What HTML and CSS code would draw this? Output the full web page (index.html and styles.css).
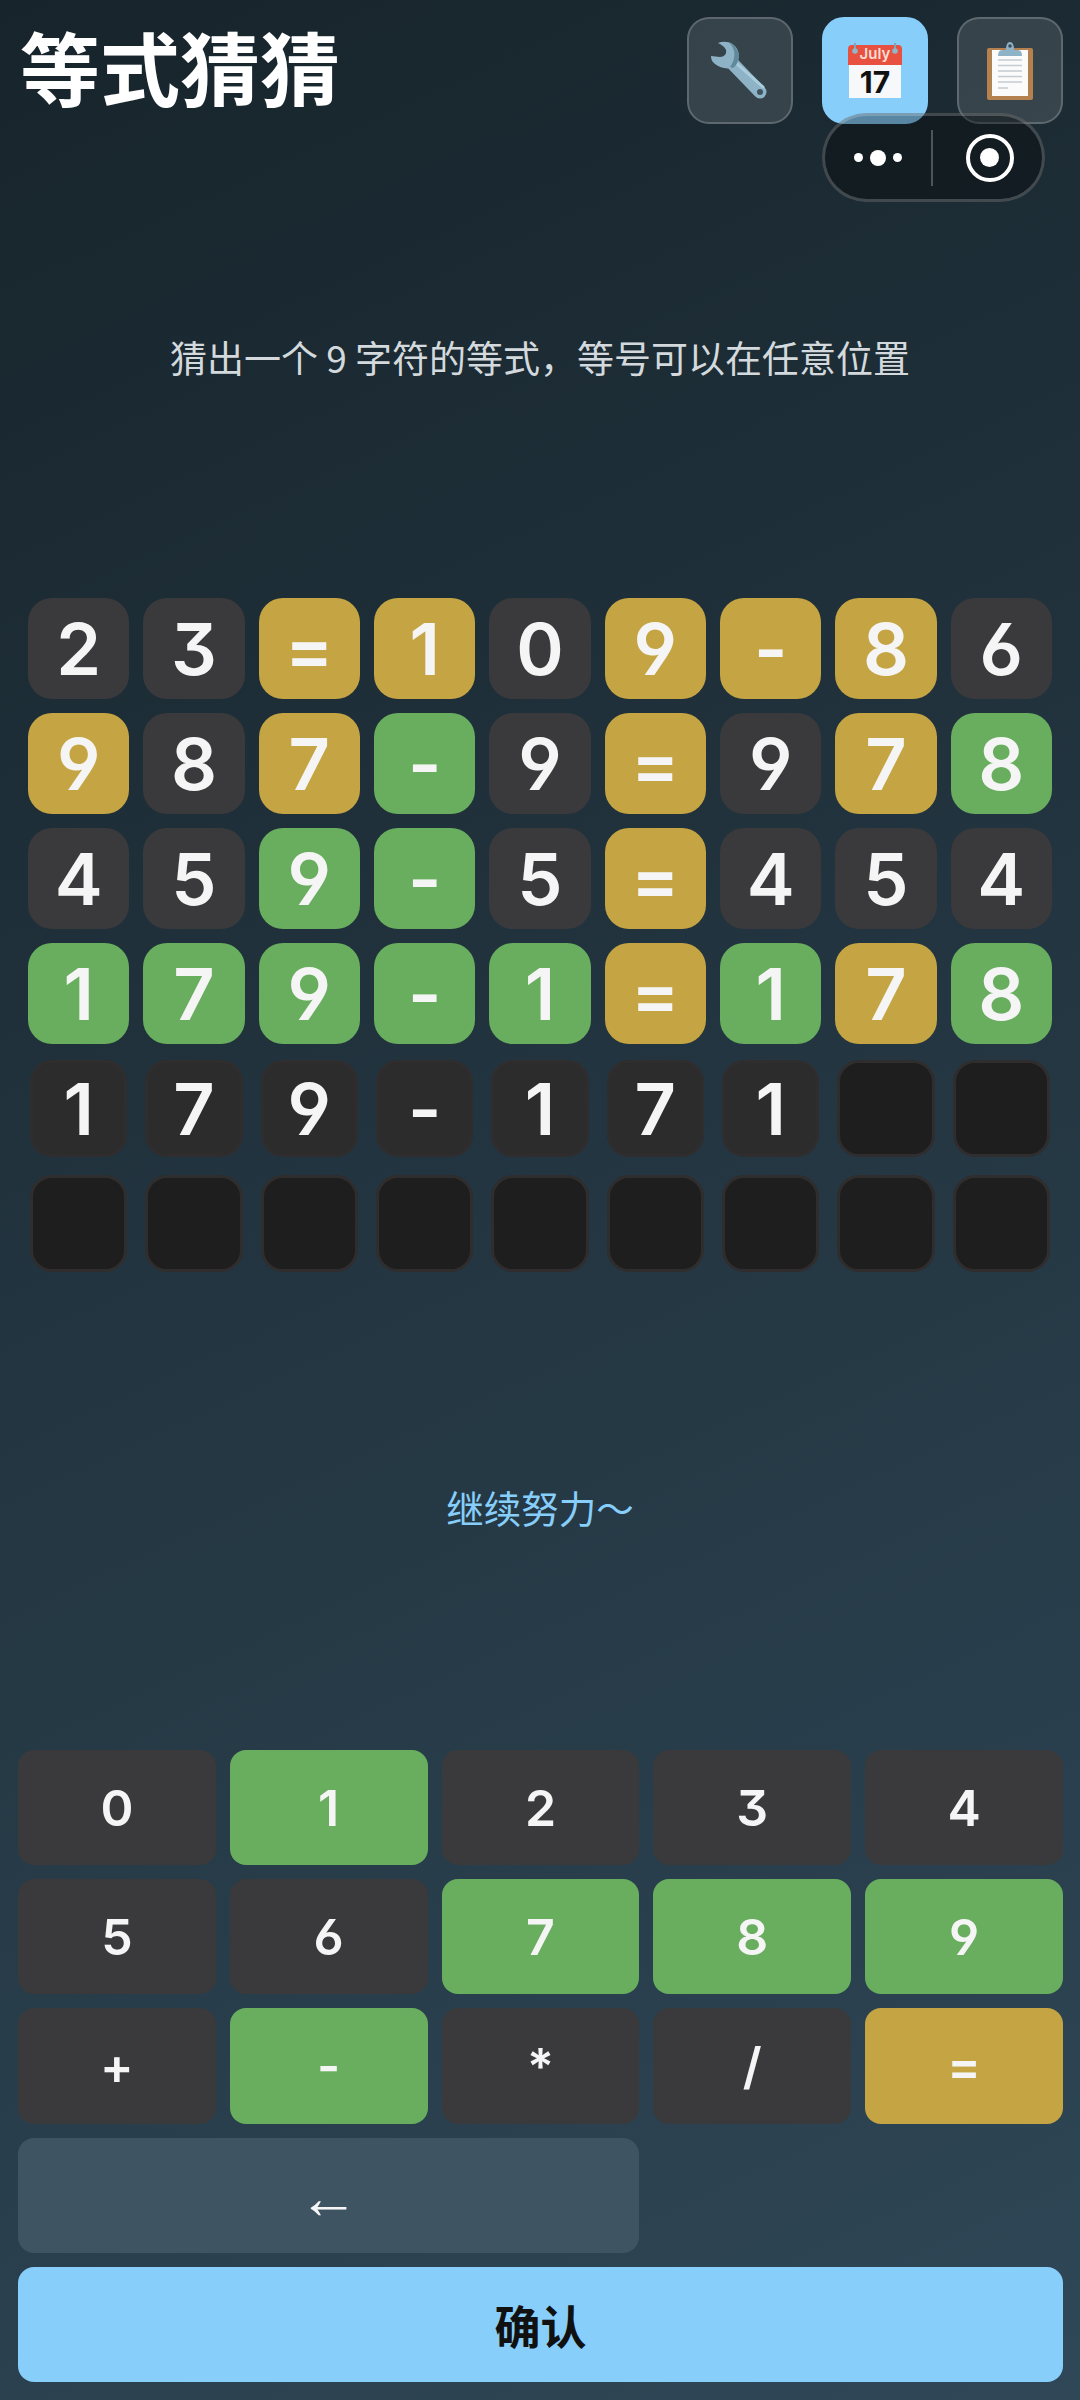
FILE: index.html
```html
<!DOCTYPE html>
<html lang="zh-CN">
<head>
    <meta charset="UTF-8">
    <meta name="viewport" content="width=device-width, initial-scale=1.0">
    <title>等式猜猜</title>
    <link rel="stylesheet" href="styles.css">
</head>
<body>
    <div class="page">
        <!-- 顶部 -->
        <div class="header">
            <div class="title">等式猜猜</div>
            <div class="tools">
                <div class="tool">
                    <svg width="64" height="64" viewBox="8 5 64 64">
                        <path d="M33 30 L60 58" stroke="#8fb3c6" stroke-width="13" stroke-linecap="round"/>
                        <path d="M36 29 L63 53" stroke="#a9cddc" stroke-width="3" stroke-linecap="round"/>
                        <path d="M18 9 C26 6 35 9 38 17 C40 23 38 29 34 33 C28 36 20 34 15 30 C12 28 11 25 11 22 L20 23 C24 23 27 20 26 16 C25 13 22 11 18 9 Z" fill="#8fb3c6"/>
                        <path d="M28 8 C34 10 38 15 39 21 C39 26 37 31 33 34 L30 33 C34 28 35 22 34 17 C33 13 31 10 28 8 Z" fill="#5f8a9b"/>
                        <circle cx="60" cy="58" r="3" fill="#3e5560"/>
                    </svg>
                </div>
                <div class="tool tool-active">
                    <svg width="54" height="56" viewBox="0 0 54 56">
                        <rect x="1" y="20" width="52" height="35" fill="#f7f8f9"/>
                        <path d="M0 6 Q0 2 4 2 H50 Q54 2 54 6 V22 H0 Z" fill="#e8503f"/>
                        <rect x="6" y="0" width="2" height="7" fill="#7fa5b8"/>
                        <rect x="46" y="0" width="2" height="7" fill="#7fa5b8"/>
                        <circle cx="7" cy="8" r="2.800" fill="#8fb6ca"/>
                        <circle cx="47" cy="8" r="2.800" fill="#8fb6ca"/>
                        <text x="27" y="16" class="cal-month">July</text>
                        <text x="27" y="50" class="cal-day">17</text>
                    </svg>
                </div>
                <div class="tool">
                    <svg width="46" height="60" viewBox="0 0 46 60">
                        <rect x="0" y="7" width="46" height="52" rx="2" fill="#b5814f"/>
                        <rect x="5" y="9" width="36" height="46" fill="#fbfbfb"/>
                        <path d="M11 19 H35 M11 24.500 H35 M11 30 H35 M11 35.500 H35 M11 41 H35" stroke="#c3cbd0" stroke-width="1.500"/>
                        <path d="M11 47 H21" stroke="#c3cbd0" stroke-width="1.500"/>
                        <path d="M11 15 Q11 9 15 9 H19 Q19 1 23 1 Q27 1 27 9 H31 Q35 9 35 15 Z" fill="#8fb3c6"/>
                        <circle cx="23" cy="5" r="1.800" fill="#3c4d57"/>
                    </svg>
                </div>
            </div>
            <!-- 小程序胶囊 -->
            <div class="capsule">
                <div class="capsule-menu">
                    <span class="dot"></span>
                    <span class="dot dot-big"></span>
                    <span class="dot"></span>
                </div>
                <div class="capsule-line"></div>
                <div class="capsule-close">
                    <span class="target"></span>
                </div>
            </div>
        </div>

        <div class="hint">猜出一个 9 字符的等式，等号可以在任意位置</div>

        <div class="board">
            <div class="tile">2</div><div class="tile">3</div><div class="tile gold">=</div><div class="tile gold">1</div><div class="tile">0</div><div class="tile gold">9</div><div class="tile gold">-</div><div class="tile gold">8</div><div class="tile">6</div>
            <div class="tile gold">9</div><div class="tile">8</div><div class="tile gold">7</div><div class="tile green">-</div><div class="tile">9</div><div class="tile gold">=</div><div class="tile">9</div><div class="tile gold">7</div><div class="tile green">8</div>
            <div class="tile">4</div><div class="tile">5</div><div class="tile green">9</div><div class="tile green">-</div><div class="tile">5</div><div class="tile gold">=</div><div class="tile">4</div><div class="tile">5</div><div class="tile">4</div>
            <div class="tile green">1</div><div class="tile green">7</div><div class="tile green">9</div><div class="tile green">-</div><div class="tile green">1</div><div class="tile gold">=</div><div class="tile green">1</div><div class="tile gold">7</div><div class="tile green">8</div>
            <div class="tile typed">1</div><div class="tile typed">7</div><div class="tile typed">9</div><div class="tile typed">-</div><div class="tile typed">1</div><div class="tile typed">7</div><div class="tile typed">1</div><div class="tile empty"></div><div class="tile empty"></div>
            <div class="tile empty"></div><div class="tile empty"></div><div class="tile empty"></div><div class="tile empty"></div><div class="tile empty"></div><div class="tile empty"></div><div class="tile empty"></div><div class="tile empty"></div><div class="tile empty"></div>
        </div>

        <div class="message">继续努力～</div>

        <!-- 键盘 -->
        <div class="keyboard">
            <div class="key">0</div><div class="key green">1</div><div class="key">2</div><div class="key">3</div><div class="key">4</div>
            <div class="key">5</div><div class="key">6</div><div class="key green">7</div><div class="key green">8</div><div class="key green">9</div>
            <div class="key">+</div><div class="key green">-</div><div class="key">*</div><div class="key">/</div><div class="key gold">=</div>
            <div class="key key-back"><span class="back-arrow">←</span></div>
            <div class="key key-ok">确认</div>
        </div>
    </div>
</body>
</html>
```

FILE: styles.css
```css
* {
    box-sizing: border-box;
}

body {
    margin: 0;
    padding: 0;
    font-family: "Noto Sans CJK SC", "Noto Sans", sans-serif;
    color: #f5f5f5;
    background-color: #1f2f39;
}

.page {
    position: relative;
    display: flex;
    flex-direction: column;
    height: 2400px;
    background: linear-gradient(155deg, #17242b 0%, #2f4757 100%);
}

.header {
    display: flex;
    justify-content: space-between;
    padding: 17px 17px 0 20px;
}

.title {
    font-size: 80px;
    font-weight: 700;
    line-height: 107px;
    color: #fff;
    height: 107px;
    margin-top: -5px;
}

.tools {
    display: flex;
    gap: 29px;
}

.tool {
    display: flex;
    align-items: center;
    justify-content: center;
    width: 106px;
    height: 107px;
    border: 2px solid rgba(255, 255, 255, 0.2);
    border-radius: 22px;
    background-color: rgba(255, 255, 255, 0.12);
}

.tool-active {
    border-color: #87cefa;
    background-color: #87cefa;
}

.cal-month {
    font-family: "Inter", sans-serif;
    font-size: 15px;
    font-weight: 600;
    fill: #fbdcd3;
    text-anchor: middle;
}

.cal-day {
    font-family: "Inter", sans-serif;
    font-size: 30px;
    font-weight: 700;
    fill: #111;
    text-anchor: middle;
}

.capsule {
    position: absolute;
    top: 113px;
    left: 822px;
    display: flex;
    align-items: center;
    width: 223px;
    height: 89px;
    border: 3px solid rgba(255, 255, 255, 0.2);
    border-radius: 45px;
    background-color: rgba(0, 0, 0, 0.35);
}

.capsule-menu {
    display: flex;
    align-items: center;
    justify-content: center;
    gap: 7px;
    width: 106px;
}

.capsule-close {
    flex: 1;
    display: flex;
    align-items: center;
    justify-content: center;
    padding-left: 4px;
}

.capsule-line {
    width: 2px;
    height: 56px;
    background-color: rgba(255, 255, 255, 0.25);
}

.dot {
    width: 9px;
    height: 9px;
    border-radius: 50%;
    background-color: #fff;
}

.dot-big {
    width: 16px;
    height: 16px;
}

.target {
    display: flex;
    align-items: center;
    justify-content: center;
    width: 48px;
    height: 48px;
    border: 4px solid #fff;
    border-radius: 50%;
}

.target::after {
    content: "";
    width: 19px;
    height: 19px;
    border-radius: 50%;
    background-color: #fff;
}

.hint {
    flex: 1;
    display: flex;
    align-items: center;
    justify-content: center;
    padding-bottom: 8px;
    font-size: 37px;
    color: #d3d9dc;
}

.board {
    display: grid;
    grid-template-columns: repeat(9, 1fr);
    grid-auto-rows: 101px;
    gap: 14px;
    padding: 0 28px;
}

.tile {
    display: flex;
    align-items: center;
    justify-content: center;
    border-radius: 24px;
    background-color: #3a3a3c;
    font-family: "Inter", sans-serif;
    font-feature-settings: "cv03", "cv04", "cv09";
    font-size: 72px;
    font-weight: 600;
}

.gold {
    background-color: #c5a443;
}

.green {
    background-color: #68ae5e;
}

.typed,
.empty {
    margin: 2px;
    border: 3px solid #2f2d2d;
    border-radius: 22px;
}

.typed {
    background-color: #2c2c2c;
}

.empty {
    background-color: #1e1e1e;
}

.message {
    flex: 1;
    display: flex;
    align-items: center;
    justify-content: center;
    padding-bottom: 11px;
    font-size: 37.5px;
    color: #87cefa;
}

.keyboard {
    display: grid;
    grid-template-columns: repeat(5, 1fr);
    grid-auto-rows: 115.2px;
    gap: 14px;
    padding: 0 17px 18px 18px;
}

.key {
    display: flex;
    align-items: center;
    justify-content: center;
    border-radius: 16px;
    background-color: #3a3a3c;
    font-family: "Inter", sans-serif;
    font-feature-settings: "cv03", "cv04", "cv09";
    font-size: 50px;
    font-weight: 600;
}

.key.gold {
    background-color: #c5a443;
}

.key.green {
    background-color: #68ae5e;
}

.key-back {
    grid-column: span 3;
    background-color: #3e5463;
}

.back-arrow {
    font-family: "Liberation Sans", sans-serif;
    font-size: 60px;
    font-weight: 700;
    padding-top: 4px;
}

.key-ok {
    grid-column: span 5;
    background-color: #87cefa;
    color: #111;
    font-family: "Noto Sans CJK SC", sans-serif;
    font-size: 46px;
    font-weight: 700;
}
```
